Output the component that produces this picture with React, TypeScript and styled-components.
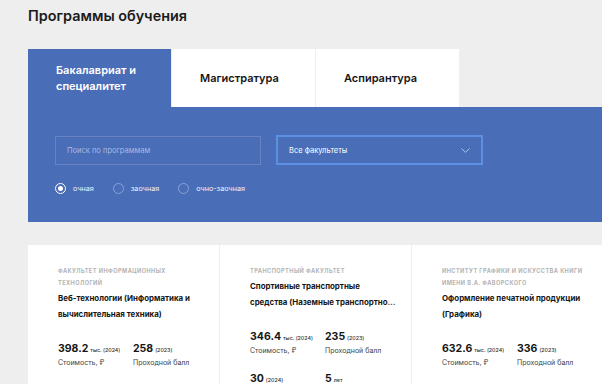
import styled, { createGlobalStyle } from 'styled-components';

const GlobalStyle = createGlobalStyle`
  html, body {
    margin: 0;
    padding: 0;
    background: #eeeeee;
    overflow: hidden;
  }
  body {
    font-family: Inter, "Noto Sans", Arial, sans-serif;
    color: #1a1a1a;
  }
`;

const Page = styled.div`
  width: 575px;
  margin-left: 28px;
  padding-top: 7px;
`;

const Title = styled.h1`
  margin: 0 0 24px;
  font-size: 14.4px;
  line-height: 18px;
  font-weight: 600;
  color: #1b1b1b;
`;

const Tabs = styled.div`
  display: flex;
  gap: 1px;
`;

const Tab = styled.div<{ $active?: boolean }>`
  width: 143px;
  height: 58px;
  box-sizing: border-box;
  padding: 0 16px 0 28px;
  display: flex;
  align-items: center;
  background: ${(p) => (p.$active ? '#4a6db7' : '#ffffff')};
  color: ${(p) => (p.$active ? '#ffffff' : '#161616')};
  font-size: 11px;
  line-height: 16px;
  font-weight: 600;
`;

const Panel = styled.div`
  background: #4a6db7;
  padding: 28px 27px 0;
  height: 115px;
  box-sizing: border-box;
`;

const Fields = styled.div`
  display: flex;
  gap: 15px;
  align-items: center;
`;

const Search = styled.div`
  width: 206px;
  height: 29px;
  box-sizing: border-box;
  border: 1px solid #6783c2;
  padding-left: 11px;
  display: flex;
  align-items: center;
  font-size: 7.5px;
  color: #a8b9e2;
`;

const Select = styled.div`
  width: 207px;
  height: 30px;
  box-sizing: border-box;
  border: 2px solid #5b90e2;
  padding: 0 11px;
  display: flex;
  align-items: center;
  justify-content: space-between;
  font-size: 7.5px;
  color: #ffffff;
`;

const Radios = styled.div`
  display: flex;
  align-items: center;
  gap: 19px;
  margin-top: 18px;
`;

const RadioItem = styled.label`
  display: flex;
  align-items: center;
  gap: 7px;
  font-size: 7.2px;
  color: #eef2fb;
`;

const RadioCircle = styled.span<{ $checked?: boolean }>`
  width: 11px;
  height: 11px;
  box-sizing: border-box;
  border-radius: 50%;
  border: 1px solid ${(p) => (p.$checked ? '#ffffff' : '#8aa2d6')};
  display: flex;
  align-items: center;
  justify-content: center;
  &::after {
    content: '';
    width: 5px;
    height: 5px;
    border-radius: 50%;
    background: ${(p) => (p.$checked ? '#ffffff' : 'transparent')};
  }
`;

const Cards = styled.div`
  display: grid;
  grid-template-columns: repeat(3, 191px);
  gap: 1px;
  margin-top: 23px;
`;

const Card = styled.div`
  background: #ffffff;
  padding: 20px 14px 30px 30px;
  height: 180px;
`;

const Faculty = styled.div`
  font-size: 5.6px;
  line-height: 12px;
  font-weight: 700;
  letter-spacing: 0.45px;
  text-transform: uppercase;
  color: #b3b3b3;
`;

const ProgramName = styled.div`
  margin-top: 1px;
  font-size: 7.9px;
  line-height: 16px;
  font-weight: 700;
  color: #161616;
  display: -webkit-box;
  -webkit-line-clamp: 2;
  -webkit-box-orient: vertical;
  overflow: hidden;
`;

const Stats = styled.div`
  display: grid;
  grid-template-columns: 75px 1fr;
  row-gap: 15px;
  margin-top: 19px;
`;

const Stat = styled.div``;

const Value = styled.div`
  display: flex;
  align-items: baseline;
  gap: 2px;
  white-space: nowrap;
  font-size: 10.5px;
  line-height: 16px;
  font-weight: 700;
  color: #161616;
`;

const Small = styled.span`
  font-size: 5.3px;
  font-weight: 500;
  color: #333;
`;

const Caption = styled.div`
  font-size: 7px;
  line-height: 10px;
  color: #444;
`;

const Chevron = () => (
  <svg width="9" height="5" viewBox="0 0 9 5" fill="none">
    <path d="M0.5 0.5L4.5 4.3L8.5 0.5" stroke="#a9c2ee" strokeWidth="1" />
  </svg>
);

type Program = {
  faculty: string;
  name: string;
  cost: string;
  score: string;
  places: string;
  years: string;
};

const programs: Program[] = [
  {
    faculty: 'Факультет информационных технологий',
    name: 'Веб-технологии (Информатика и вычислительная техника)',
    cost: '398.2',
    score: '258',
    places: '25',
    years: '4 года',
  },
  {
    faculty: 'Транспортный факультет',
    name: 'Спортивные транспортные средства (Наземные транспортно-технологические средства)',
    cost: '346.4',
    score: '235',
    places: '30',
    years: '5 лет',
  },
  {
    faculty: 'Институт графики и искусства книги имени В.А. Фаворского',
    name: 'Оформление печатной продукции (Графика)',
    cost: '632.6',
    score: '336',
    places: '15',
    years: '4 года',
  },
];

export default function App() {
  return (
    <>
      <GlobalStyle />
      <Page>
        <Title>Программы обучения</Title>
        <Tabs>
          <Tab $active>Бакалавриат и специалитет</Tab>
          <Tab>Магистратура</Tab>
          <Tab>Аспирантура</Tab>
        </Tabs>
        <Panel>
          <Fields>
            <Search>Поиск по программам</Search>
            <Select>
              Все факультеты
              <Chevron />
            </Select>
          </Fields>
          <Radios>
            <RadioItem>
              <RadioCircle $checked />
              очная
            </RadioItem>
            <RadioItem>
              <RadioCircle />
              заочная
            </RadioItem>
            <RadioItem>
              <RadioCircle />
              очно-заочная
            </RadioItem>
          </Radios>
        </Panel>
        <Cards>
          {programs.map((p) => (
            <Card key={p.name}>
              <Faculty>{p.faculty}</Faculty>
              <ProgramName>{p.name}</ProgramName>
              <Stats>
                <Stat>
                  <Value>
                    {p.cost} <Small>тыс. (2024)</Small>
                  </Value>
                  <Caption>Стоимость, ₽</Caption>
                </Stat>
                <Stat>
                  <Value>
                    {p.score} <Small>(2023)</Small>
                  </Value>
                  <Caption>Проходной балл</Caption>
                </Stat>
                <Stat>
                  <Value>
                    {p.places} <Small>(2024)</Small>
                  </Value>
                  <Caption>Бюджетных мест</Caption>
                </Stat>
                <Stat>
                  <Value>
                    {p.years.split(' ')[0]} <Small>{p.years.split(' ')[1]}</Small>
                  </Value>
                  <Caption>Срок обучения</Caption>
                </Stat>
              </Stats>
            </Card>
          ))}
        </Cards>
      </Page>
    </>
  );
}
